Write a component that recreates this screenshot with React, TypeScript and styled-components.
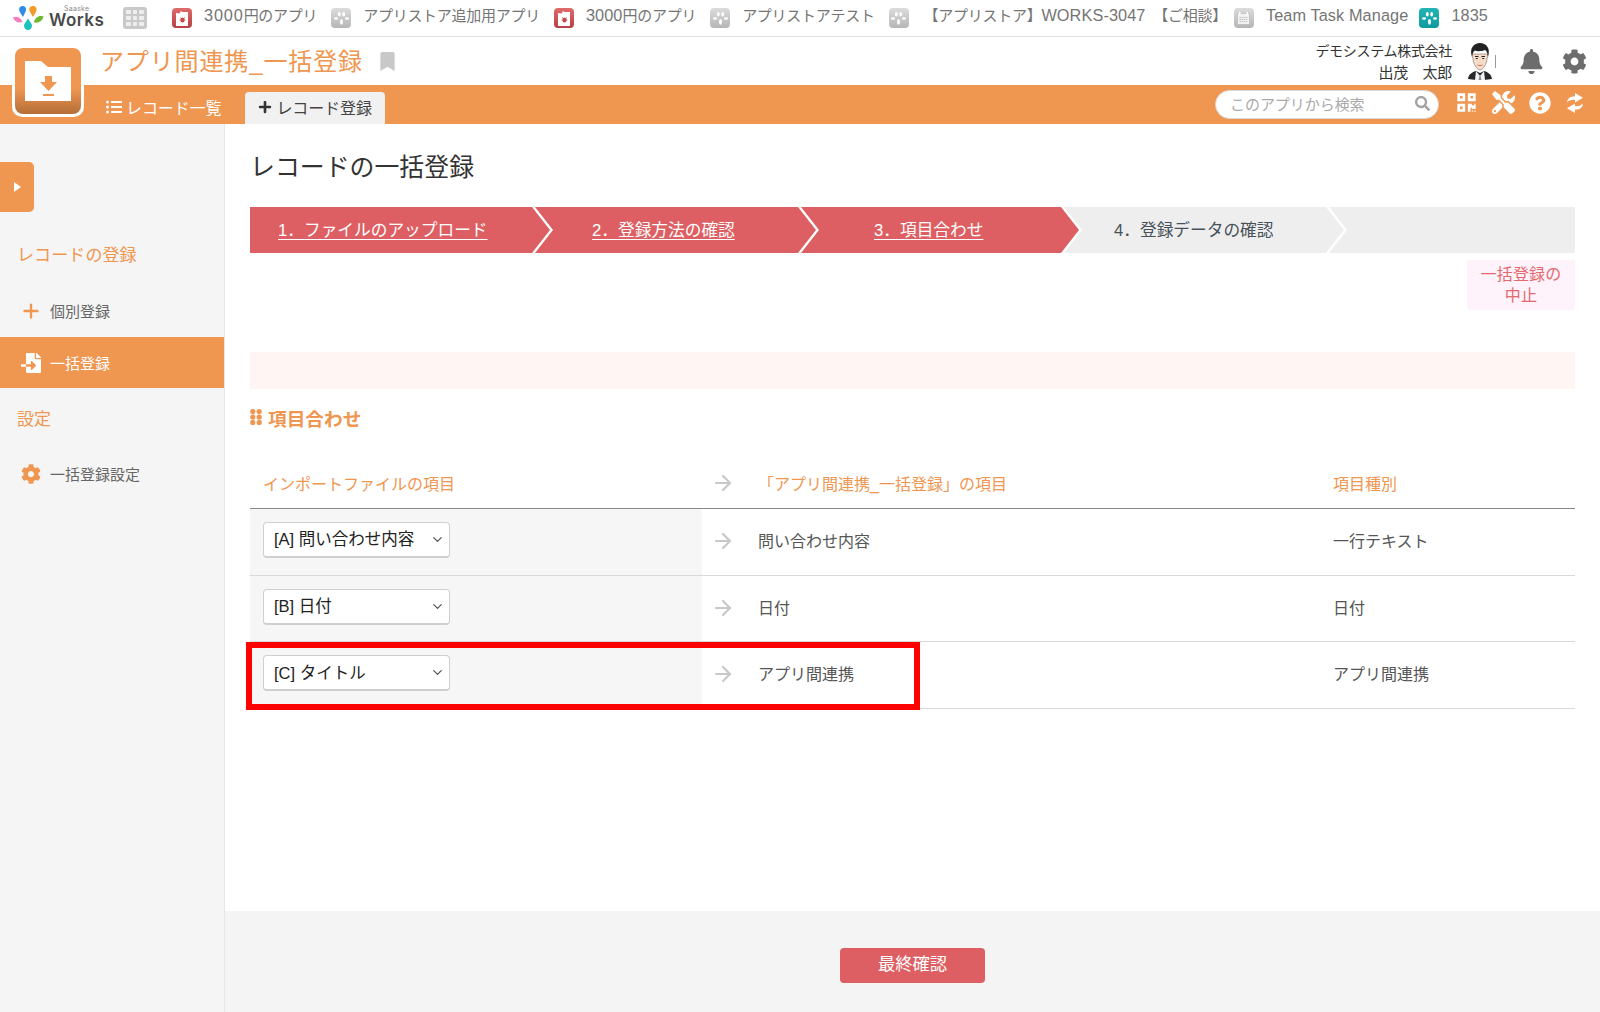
import React from "react";
import styled, { createGlobalStyle } from "styled-components";
import { FaBell, FaBookmark, FaCog, FaFileImport, FaListUl, FaPlus, FaQrcode, FaQuestionCircle, FaSearch, FaTools } from "react-icons/fa";
import { ArrowRight, ChevronDown, Plus } from "lucide-react";

const ORANGE = "#ef9651";
const RED = "#de5f63";

const Global = createGlobalStyle`
  html, body { margin: 0; padding: 0; background: #fff; }
  body { font-family: "Liberation Sans", "Noto Sans CJK JP", sans-serif; color: #555; }
  * { box-sizing: border-box; }
`;

const Page = styled.div`
  width: 1600px;
  height: 1012px;
  display: flex;
  flex-direction: column;
  overflow: hidden;
  position: relative;
`;

/* ---------- top bar ---------- */
const TopBar = styled.div`
  height: 37px;
  flex: none;
  border-bottom: 1px solid #e0e0e0;
  display: flex;
  align-items: center;
  padding-left: 13px;
`;
const LogoBox = styled.div`
  width: 92px;
  height: 30px;
  display: flex;
  align-items: center;
  gap: 5px;
`;
const LogoText = styled.div`
  display: flex;
  flex-direction: column;
  align-items: center;
  color: #4a4a4a;
  font-family: "Inter", "Liberation Sans", sans-serif;
  font-weight: 600;
  font-size: 17px;
  line-height: 15px;
  letter-spacing: 0.5px;
  padding-bottom: 4px;
  small {
    font-size: 7px;
    line-height: 8px;
    font-weight: 400;
    color: #8b8b8b;
    letter-spacing: 0.3px;
  }
`;
const GridIcon = styled.div`
  width: 24px;
  height: 22px;
  margin: 0 25px 0 18px;
  background: #c9c9c9;
  border-radius: 3px;
  padding: 3px;
  display: grid;
  grid-template-columns: repeat(3, 1fr);
  gap: 2px;
  span { background: #eee; border-radius: 1px; }
`;
const AppLink = styled.div<{ $gap?: number; $after?: number }>`
  display: flex;
  align-items: center;
  gap: ${(p) => p.$gap ?? 12}px;
  margin-right: ${(p) => p.$after ?? 14}px;
  font-size: 15px;
  letter-spacing: -0.28px;
  color: #757575;
  white-space: nowrap;
`;
const AppLabel = styled.span`
  display: block;
  line-height: 20px;
  height: 20px;
  position: relative;
  top: -2px;
`;
const Latin = styled.span<{ $wide?: boolean }>`
  font-size: 16.3px;
  line-height: 1;
  letter-spacing: ${(p) => (p.$wide ? 0.85 : 0.1)}px;
`;
const AppGlyph = styled.div<{ $tone: "red" | "gray" | "teal" }>`
  width: 20px;
  height: 20px;
  flex: none;
  border-radius: 4px;
  display: flex;
  align-items: center;
  justify-content: center;
  background: ${(p) =>
    p.$tone === "red"
      ? "linear-gradient(#e06b6b,#b83f44)"
      : p.$tone === "teal"
      ? "linear-gradient(#22b5b5,#0d9a9f)"
      : "linear-gradient(#dcdcdc,#b5b5b5)"};
`;

/* ---------- header ---------- */
const Header = styled.div`
  height: 48px;
  flex: none;
  display: flex;
  align-items: center;
  padding-left: 100px;
  padding-right: 13px;
`;
const AppTitle = styled.h1`
  margin: 0;
  font-size: 24px;
  font-weight: 400;
  color: ${ORANGE};
  line-height: 32px;
  position: relative;
  top: 1px;
  letter-spacing: 0.87px;
`;
const Bookmark = styled.span`
  color: #c8c8c8;
  font-size: 19px;
  margin-left: 15px;
  display: flex;
`;
const UserBox = styled.div`
  margin-left: auto;
  display: flex;
  align-items: center;
`;
const UserName = styled.div`
  text-align: right;
  font-size: 14px;
  line-height: 21px;
  color: #333;
  letter-spacing: -0.3px;
  padding-top: 2px;
`;
const UserPerson = styled.span`
  font-size: 15px;
`;
const Avatar = styled.div`
  width: 28px;
  height: 37px;
  margin: 0 1px 0 14px;
  display: flex;
`;
const Divider = styled.span`
  width: 1px;
  height: 13px;
  background: #999;
  margin-right: 23px;
`;
const HeaderIcon = styled.span<{ $size: number; $gap?: number }>`
  display: flex;
  color: #6d6d6d;
  font-size: ${(p) => p.$size}px;
  margin-right: ${(p) => p.$gap ?? 0}px;
`;

/* ---------- orange bar ---------- */
const NavBar = styled.div`
  height: 39px;
  flex: none;
  background: ${ORANGE};
  display: flex;
  align-items: flex-end;
  padding-left: 106px;
  padding-right: 16px;
`;
const NavLink = styled.div`
  display: flex;
  align-items: center;
  gap: 4px;
  height: 32px;
  color: #fff;
  font-size: 16px;
  letter-spacing: -0.1px;
  margin-right: 24px;
  white-space: nowrap;
  padding-bottom: 3px;
`;
const NavTab = styled.div`
  width: 140px;
  height: 32px;
  background: #f1f1f1;
  border-radius: 4px 4px 0 0;
  color: #444;
  font-size: 16px;
  letter-spacing: -0.1px;
  display: flex;
  align-items: center;
  gap: 4px;
  padding-left: 13px;
  padding-bottom: 2px;
  white-space: nowrap;
  svg { color: #333; }
`;
const NavTools = styled.div`
  margin-left: auto;
  align-self: center;
  display: flex;
  align-items: center;
`;
const SearchBox = styled.div`
  width: 224px;
  height: 29px;
  border-radius: 15px;
  background: #fff;
  border: 1px solid #d8d8d8;
  display: flex;
  align-items: center;
  padding: 0 8px 2px 14px;
  color: #aaa;
  font-size: 15px;
  letter-spacing: -0.05px;
  justify-content: space-between;
  margin-right: 17px;
  svg { color: #a2a2a2; font-size: 15px; }
`;
const NavIcon = styled.span<{ $size: number; $gap?: number }>`
  display: flex;
  color: #fff;
  font-size: ${(p) => p.$size}px;
  margin-right: ${(p) => p.$gap ?? 0}px;
  margin-bottom: 4px;
`;
const AppBadge = styled.div`
  position: absolute;
  left: 12px;
  top: 46px;
  width: 72px;
  height: 71px;
  border-radius: 10px;
  background: #fff;
  padding: 2px 3px 3px;
`;
const AppBadgeInner = styled.div`
  width: 100%;
  height: 100%;
  border-radius: 8px;
  background: linear-gradient(${ORANGE} 0 62%, #b46e38 100%);
  display: flex;
  align-items: center;
  justify-content: center;
`;

/* ---------- body ---------- */
const Body = styled.div`
  flex: 1;
  display: flex;
  min-height: 0;
`;
const Sidebar = styled.aside`
  width: 225px;
  flex: none;
  background: #f5f5f5;
  border-right: 1px solid #e6e6e6;
  display: flex;
  flex-direction: column;
  padding-top: 38px;
`;
const Toggle = styled.div`
  width: 34px;
  height: 50px;
  background: ${ORANGE};
  border-radius: 0 5px 5px 0;
  display: flex;
  align-items: center;
  padding-left: 14px;
  &::before {
    content: "";
    border-left: 7px solid #fff;
    border-top: 5px solid transparent;
    border-bottom: 5px solid transparent;
  }
`;
const SideLabel = styled.div<{ $top: number; $bottom: number }>`
  height: 30px;
  line-height: 30px;
  margin: ${(p) => p.$top}px 0 ${(p) => p.$bottom}px;
  padding-left: 17px;
  font-size: 17px;
  letter-spacing: 0.1px;
  color: ${ORANGE};
`;
const SideItem = styled.div<{ $active?: boolean; $lift?: number }>`
  height: 51px;
  display: flex;
  align-items: center;
  gap: 8px;
  padding-left: 20px;
  padding-bottom: ${(p) => p.$lift ?? 0}px;
  font-size: 15px;
  color: ${(p) => (p.$active ? "#fff" : "#666")};
  background: ${(p) => (p.$active ? ORANGE : "transparent")};
`;
const SideIcon = styled.span<{ $active?: boolean; $size: number }>`
  width: 22px;
  display: flex;
  justify-content: center;
  font-size: ${(p) => p.$size}px;
  color: ${(p) => (p.$active ? "#fff" : ORANGE)};
`;

const Main = styled.main`
  flex: 1;
  display: flex;
  flex-direction: column;
  min-width: 0;
`;
const Content = styled.div`
  flex: 1;
  padding: 25px 25px 0;
  display: flex;
  flex-direction: column;
`;
const PageTitle = styled.h2`
  margin: 0;
  font-size: 24.9px;
  line-height: 36px;
  font-weight: 400;
  color: #333;
`;
const Stepper = styled.div`
  margin-top: 22px;
  height: 46px;
  display: flex;
`;
const Step = styled.div<{ $done?: boolean; $width?: number; $pad: number; $first?: boolean }>`
  flex: ${(p) => (p.$width ? `0 0 ${p.$width}px` : "1")};
  margin-left: ${(p) => (p.$first ? 0 : -15)}px;
  height: 46px;
  background: ${(p) => (p.$done ? RED : "#eeeeee")};
  color: ${(p) => (p.$done ? "#fff" : "#47525a")};
  text-decoration: ${(p) => (p.$done ? "underline" : "none")};
  text-underline-offset: 3px;
  font-size: 16.7px;
  line-height: 48px;
  padding-left: ${(p) => p.$pad}px;
  white-space: nowrap;
  clip-path: ${(p) =>
    p.$first
      ? "polygon(0 0, calc(100% - 18px) 0, 100% 50%, calc(100% - 18px) 100%, 0 100%)"
      : p.$width
      ? "polygon(0 0, calc(100% - 18px) 0, 100% 50%, calc(100% - 18px) 100%, 0 100%, 18px 50%)"
      : "polygon(0 0, 100% 0, 100% 100%, 0 100%, 18px 50%)"};
`;
const CancelRow = styled.div`
  display: flex;
  justify-content: flex-end;
  margin-top: 7px;
`;
const CancelButton = styled.div`
  width: 108px;
  height: 50px;
  background: #fff3fb;
  border-radius: 3px;
  color: #e4686d;
  font-size: 16px;
  line-height: 21px;
  text-align: center;
  padding: 4px 10px;
  letter-spacing: 0.15px;
`;
const Notice = styled.div`
  margin-top: 42px;
  height: 37px;
  background: #fff5f3;
`;
const SectionTitle = styled.div`
  margin-top: 16px;
  height: 24px;
  display: flex;
  align-items: center;
  gap: 6px;
  color: ${ORANGE};
  font-weight: 700;
  font-size: 18.7px;
`;
const Grid = styled.div`
  margin-top: 31px;
  display: flex;
  flex-direction: column;
`;
const Row = styled.div<{ $head?: boolean }>`
  position: relative;
  display: grid;
  grid-template-columns: 452px 56px 575px 1fr;
  height: ${(p) => (p.$head ? 49 : 66.7)}px;
  border-bottom: 1px solid ${(p) => (p.$head ? "#888" : "#d9d9d9")};
`;
const SourceCell = styled.div<{ $head?: boolean }>`
  display: flex;
  align-items: center;
  padding-left: 13px;
  padding-bottom: ${(p) => (p.$head ? 3 : 4)}px;
  background: ${(p) => (p.$head ? "transparent" : "#f6f6f6")};
  color: ${ORANGE};
  font-size: 16px;
`;
const ArrowCell = styled.div`
  display: flex;
  align-items: center;
  padding-left: 9px;
  padding-bottom: 2px;
  color: #c8c8c8;
`;
const Cell = styled.div<{ $head?: boolean }>`
  display: flex;
  align-items: center;
  font-size: 16px;
  color: ${(p) => (p.$head ? ORANGE : "#555")};
  padding-bottom: ${(p) => (p.$head ? 2 : 4)}px;
`;
const SelectWrap = styled.div`
  position: relative;
  width: 187px;
  height: 36px;
`;
const Select = styled.select`
  appearance: none;
  width: 100%;
  height: 100%;
  border: 1px solid #cfcfcf;
  border-bottom-width: 2px;
  border-radius: 4px;
  background: #fff;
  padding: 0 24px 0 10px;
  font-family: "Liberation Sans", "Noto Sans CJK JP", sans-serif;
  font-size: 16.5px;
  color: #222;
`;
const SelectChevron = styled.span`
  position: absolute;
  right: 5px;
  top: 10px;
  display: flex;
  color: #555;
  pointer-events: none;
`;
const Highlight = styled.div`
  position: absolute;
  left: -4px;
  top: 0;
  width: 674px;
  height: 68px;
  border: 6px solid #ff0000;
  pointer-events: none;
`;
const Footer = styled.div`
  height: 101px;
  flex: none;
  background: #f4f4f4;
  display: flex;
  justify-content: center;
  padding-top: 37px;
`;
const SubmitButton = styled.div`
  width: 145px;
  height: 35px;
  background: ${RED};
  border-radius: 4px;
  color: #fff;
  font-size: 17.3px;
  text-align: center;
  line-height: 33px;
`;

/* ---------- drawings ---------- */
const LogoMark = () => (
  <svg width="31" height="24" viewBox="0 0 31 24" style={{ flex: "none" }}>
    <path d="M9.500 0C12 0 13.500 2 13 4.300 12.500 6.300 11 8.500 10 11 8.500 8.500 6.700 6.500 6.200 4.300 5.700 2 7.200 0 9.500 0z" fill="#2f8de4" />
    <path d="M20 0c2.400 0 4 2 3.500 4.300-.5 2.200-2.200 4.200-3.500 6.700-1.200-2.500-3.100-4.700-3.700-6.700C15.800 2 17.600 0 20 0z" fill="#f39a2b" />
    <path d="M0 11.500c3.300-1.800 7.500-.8 9.500 4.500-3.800 1.200-7.800 0-9.500-4.500z" fill="#f27fc2" />
    <path d="M30.500 10.500c-3.300-1.200-7.800-.2-9.700 5.800 4 1.200 8.300-.4 9.700-5.800z" fill="#6fb92f" />
    <path d="M15 12.500c1.600 3 4 5 4 7.300C19 22.200 17.300 24 15 24s-4-1.800-4-4.200c0-2.300 2.400-4.300 4-7.300z" fill="#1fc0c0" />
  </svg>
);
const FileBug = () => (
  <svg width="12" height="15" viewBox="0 0 12 15">
    <path d="M0 2v13h12V1H6.500L5 0 3.500 2.500z" fill="#fff" />
    <ellipse cx="6.500" cy="9" rx="2.100" ry="2.500" fill="#c6474b" />
    <path d="M4 6.500l1.500 1M9 6.500L7.500 7.500M3.500 9h6" stroke="#c6474b" strokeWidth=".7" />
  </svg>
);
const Paw = () => (
  <svg width="15" height="13" viewBox="0 0 15 13" fill="#fff">
    <ellipse cx="5.300" cy="2.200" rx="1.400" ry="2.200" />
    <ellipse cx="9.700" cy="2.200" rx="1.400" ry="2.200" />
    <ellipse cx="2" cy="6.500" rx="2" ry="1.300" />
    <ellipse cx="13" cy="6.500" rx="2" ry="1.300" />
    <ellipse cx="7.500" cy="9.800" rx="1.500" ry="2.900" />
  </svg>
);
const Calendar = () => (
  <svg width="13" height="13" viewBox="0 0 13 13">
    <rect x="0.500" y="1.500" width="12" height="11" rx="1" fill="#f2f2f2" stroke="#b0b0b0" strokeWidth="0.600" />
    <rect x="2" y="0" width="1.500" height="3" fill="#fff" />
    <rect x="9.500" y="0" width="1.500" height="3" fill="#fff" />
    <path d="M2.500 5.500h8M2.500 7.500h8M2.500 9.500h8" stroke="#c2c2c2" strokeWidth="1" strokeDasharray="1.500 .6" />
  </svg>
);
const FolderDownload = () => (
  <svg width="46" height="40" viewBox="0 0 46 40">
    <path d="M0 0h16l7 6h23v34H0z" fill="#fff" />
    <path d="M20 15h7v6h5l-8.500 9L15 21h5z" fill={ORANGE} />
    <rect x="18" y="33" width="11" height="2" fill={ORANGE} />
  </svg>
);
const Face = () => (
  <svg width="28" height="37" viewBox="0 0 28 37">
    <path d="M2 36c.5-4 3-6.500 8-8l4 2 4-2c5 1.500 7.500 4 8 8l-8 1H10z" fill="#26292c" />
    <path d="M10 28l4 5 4-5 1 9H9z" fill="#f4f4f4" />
    <path d="M14 31l-1.500 6h3z" fill="#8d8d8d" />
    <path d="M6.500 11c0 8 3 15 7.500 16 4.500-1 7.500-8 7.500-16z" fill="#f6dcc6" stroke="#6b5a50" strokeWidth=".5" />
    <path d="M6 14C3 5 8 0 14 0c6 0 11 5 8 14-.4-3-1-6-3-7-3 1.500-8 1.500-10 .5-2 1-2.500 3.500-3 6.500z" fill="#202224" />
    <path d="M9 13.500h3.500M15.500 13.500H19" stroke="#222" strokeWidth="1" />
    <path d="M9.800 15.500h2M16.200 15.500h2" stroke="#333" strokeWidth="1" />
    <path d="M11.500 22c1.500.8 3.500.8 5 0" stroke="#a0574e" strokeWidth=".8" fill="none" />
  </svg>
);
const Dots = () => (
  <svg width="12" height="16" viewBox="0 0 12 16" fill={ORANGE}>
    {[2.600, 8, 13.400].flatMap((y) => [2.800, 9.200].map((x) => <circle key={`${x}-${y}`} cx={x} cy={y} r="2.600" />))}
  </svg>
);
const SyncArrows = () => (
  <svg width="18" height="20" viewBox="0 0 18 20" fill="#fff">
    <path d="M1 9.500C1.500 5 5 3 9 3.500V0L17 4.800 9 9.500V7C6 6.500 3 7.500 1 9.500z" />
    <path d="M1 9.500C1.500 5 5 3 9 3.500V0L17 4.800 9 9.500V7C6 6.500 3 7.500 1 9.500z" transform="rotate(180 9 10)" />
  </svg>
);

const apps: { label: React.ReactNode; tone: "red" | "gray" | "teal"; icon: React.ReactNode; gap?: number; after?: number }[] = [
  { label: <><Latin $wide>3000</Latin>円のアプリ</>, tone: "red", icon: <FileBug /> },
  { label: "アプリストア追加用アプリ", tone: "gray", icon: <Paw /> },
  { label: <><Latin>3000</Latin>円のアプリ</>, tone: "red", icon: <FileBug /> },
  { label: "アプリストアテスト", tone: "gray", icon: <Paw /> },
  { label: <>【アプリストア】<Latin>WORKS-3047</Latin>{"\u00a0\u00a0"}【ご相談】</>, tone: "gray", icon: <Paw />, gap: 15, after: 7 },
  { label: <Latin>Team Task Manage</Latin>, tone: "gray", icon: <Calendar />, after: 11 },
  { label: <Latin>1835</Latin>, tone: "teal", icon: <Paw /> },
];

const rows = [
  { source: "[A] 問い合わせ内容", target: "問い合わせ内容", kind: "一行テキスト" },
  { source: "[B] 日付", target: "日付", kind: "日付" },
  { source: "[C] タイトル", target: "アプリ間連携", kind: "アプリ間連携", marked: true },
];

export default function App() {
  return (
    <Page>
      <Global />
      <TopBar>
        <LogoBox>
          <LogoMark />
          <LogoText>
            <small>Saaske</small>
            Works
          </LogoText>
        </LogoBox>
        <GridIcon>
          {Array.from({ length: 9 }).map((_, i) => (
            <span key={i} />
          ))}
        </GridIcon>
        {apps.map((a, i) => (
          <AppLink key={i} $gap={a.gap} $after={a.after}>
            <AppGlyph $tone={a.tone}>{a.icon}</AppGlyph>
            <AppLabel>{a.label}</AppLabel>
          </AppLink>
        ))}
      </TopBar>
      <Header>
        <AppTitle>アプリ間連携_一括登録</AppTitle>
        <Bookmark>
          <FaBookmark />
        </Bookmark>
        <UserBox>
          <UserName>
            デモシステム株式会社
            <br />
            <UserPerson>出茂　太郎</UserPerson>
          </UserName>
          <Avatar>
            <Face />
          </Avatar>
          <Divider />
          <HeaderIcon $size={25} $gap={18}>
            <FaBell />
          </HeaderIcon>
          <HeaderIcon $size={25}>
            <FaCog />
          </HeaderIcon>
        </UserBox>
      </Header>
      <NavBar>
        <NavLink>
          <FaListUl size={16} />
          レコード一覧
        </NavLink>
        <NavTab>
          <FaPlus size={14} />
          レコード登録
        </NavTab>
        <NavTools>
          <SearchBox>
            このアプリから検索
            <FaSearch />
          </SearchBox>
          <NavIcon $size={21} $gap={15}>
            <FaQrcode />
          </NavIcon>
          <NavIcon $size={23} $gap={14}>
            <FaTools />
          </NavIcon>
          <NavIcon $size={22} $gap={15}>
            <FaQuestionCircle />
          </NavIcon>
          <NavIcon $size={19}>
            <SyncArrows />
          </NavIcon>
        </NavTools>
      </NavBar>
      <AppBadge>
        <AppBadgeInner>
          <FolderDownload />
        </AppBadgeInner>
      </AppBadge>
      <Body>
        <Sidebar>
          <Toggle />
          <SideLabel $top={29} $bottom={15}>レコードの登録</SideLabel>
          <SideItem $lift={2}>
            <SideIcon $size={22}>
              <Plus size={22} strokeWidth={2.6} />
            </SideIcon>
            個別登録
          </SideItem>
          <SideItem $active>
            <SideIcon $active $size={20}>
              <FaFileImport />
            </SideIcon>
            一括登録
          </SideItem>
          <SideLabel $top={17} $bottom={13}>設定</SideLabel>
          <SideItem>
            <SideIcon $size={20}>
              <FaCog />
            </SideIcon>
            一括登録設定
          </SideItem>
        </Sidebar>
        <Main>
          <Content>
            <PageTitle>レコードの一括登録</PageTitle>
            <Stepper>
              <Step $done $first $width={300} $pad={28}>1．ファイルのアップロード</Step>
              <Step $done $width={281} $pad={57}>2．登録方法の確認</Step>
              <Step $done $width={278} $pad={73}>3．項目合わせ</Step>
              <Step $width={280} $pad={50}>4．登録データの確認</Step>
              <Step $pad={0} />
            </Stepper>
            <CancelRow>
              <CancelButton>一括登録の中止</CancelButton>
            </CancelRow>
            <Notice />
            <SectionTitle>
              <Dots />
              項目合わせ
            </SectionTitle>
            <Grid>
              <Row $head>
                <SourceCell $head>インポートファイルの項目</SourceCell>
                <ArrowCell>
                  <ArrowRight size={24} strokeWidth={2.2} />
                </ArrowCell>
                <Cell $head>「アプリ間連携_一括登録」の項目</Cell>
                <Cell $head>項目種別</Cell>
              </Row>
              {rows.map((r) => (
                <Row key={r.source}>
                  <SourceCell>
                    <SelectWrap>
                      <Select defaultValue={r.source}>
                        <option>{r.source}</option>
                      </Select>
                      <SelectChevron>
                        <ChevronDown size={15} />
                      </SelectChevron>
                    </SelectWrap>
                  </SourceCell>
                  <ArrowCell>
                    <ArrowRight size={24} strokeWidth={2.2} />
                  </ArrowCell>
                  <Cell>{r.target}</Cell>
                  <Cell>{r.kind}</Cell>
                  {r.marked && <Highlight />}
                </Row>
              ))}
            </Grid>
          </Content>
          <Footer>
            <SubmitButton>最終確認</SubmitButton>
          </Footer>
        </Main>
      </Body>
    </Page>
  );
}
